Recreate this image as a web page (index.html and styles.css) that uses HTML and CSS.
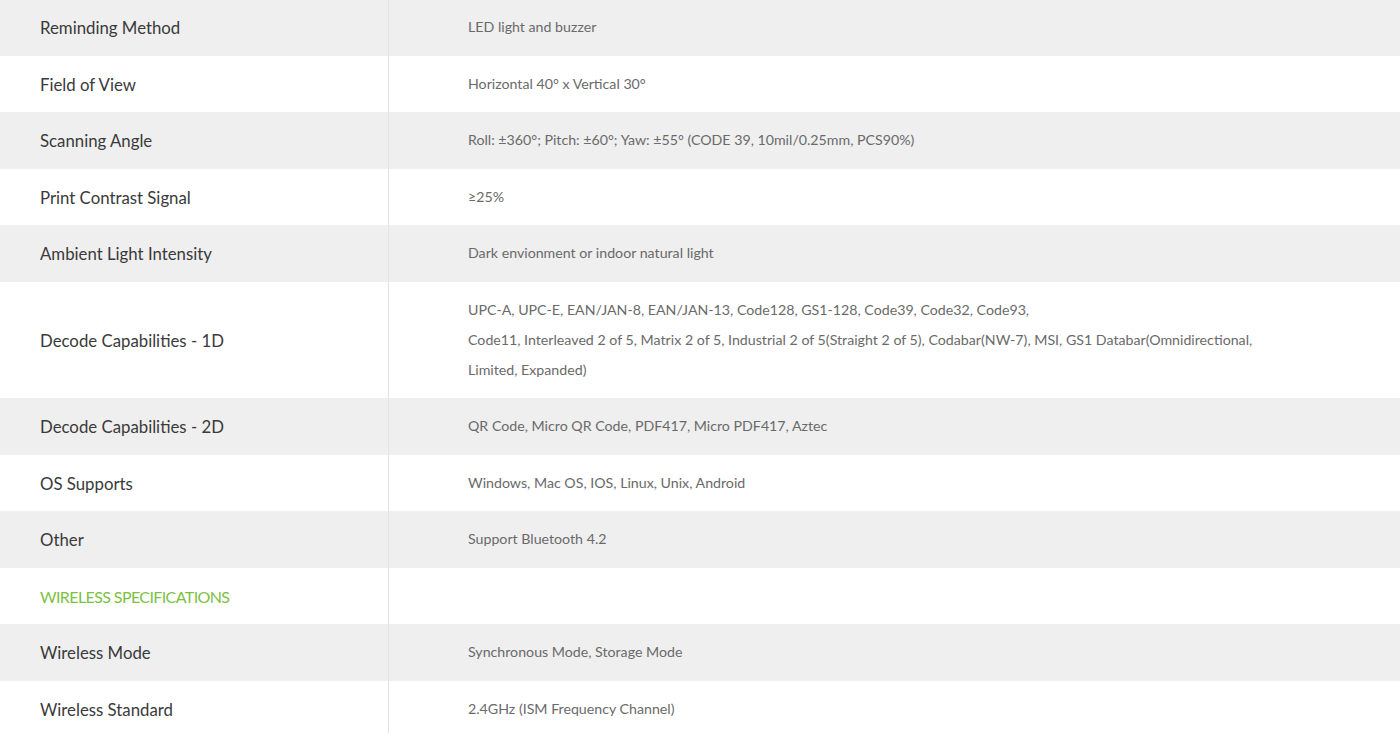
FILE: index.html
```html
<!DOCTYPE html>
<html lang="en">
<head>
<meta charset="utf-8">
<title>Specifications</title>
<link rel="stylesheet" href="styles.css">
</head>
<body>
<table class="spec">
  <tbody>
    <tr class="odd"><td class="label">Reminding Method</td><td class="value">LED light and buzzer</td></tr>
    <tr><td class="label">Field of View</td><td class="value">Horizontal 40° x Vertical 30°</td></tr>
    <tr class="odd"><td class="label">Scanning Angle</td><td class="value">Roll: ±360°; Pitch: ±60°; Yaw: ±55° (CODE 39, 10mil/0.25mm, PCS90%)</td></tr>
    <tr><td class="label">Print Contrast Signal</td><td class="value">≥25%</td></tr>
    <tr class="odd"><td class="label">Ambient Light Intensity</td><td class="value">Dark envionment or indoor natural light</td></tr>
    <tr><td class="label">Decode Capabilities - 1D</td><td class="value">UPC-A, UPC-E, EAN/JAN-8, EAN/JAN-13, Code128, GS1-128, Code39, Code32, Code93,<br>Code11, Interleaved 2 of 5, Matrix 2 of 5, Industrial 2 of 5(Straight 2 of 5), Codabar(NW-7), MSI, GS1 Databar(Omnidirectional,<br>Limited, Expanded)</td></tr>
    <tr class="odd"><td class="label">Decode Capabilities - 2D</td><td class="value">QR Code, Micro QR Code, PDF417, Micro PDF417, Aztec</td></tr>
    <tr><td class="label">OS Supports</td><td class="value">Windows, Mac OS, IOS, Linux, Unix, Android</td></tr>
    <tr class="odd"><td class="label">Other</td><td class="value">Support Bluetooth 4.2</td></tr>
    <tr><td class="label section">WIRELESS SPECIFICATIONS</td><td class="value"></td></tr>
    <tr class="odd"><td class="label">Wireless Mode</td><td class="value">Synchronous Mode, Storage Mode</td></tr>
    <tr><td class="label">Wireless Standard</td><td class="value">2.4GHz (ISM Frequency Channel)</td></tr>
  </tbody>
</table>
</body>
</html>
```

FILE: styles.css
```css
html, body {
  margin: 0;
  padding: 0;
  background: #ffffff;
}

body {
  font-family: Lato, "Open Sans", "Liberation Sans", sans-serif;
  overflow: hidden;
}

.spec {
  width: 100%;
  border-collapse: collapse;
  margin-top: -1px;
}

.spec tr.odd {
  background: #efefef;
}

.spec td {
  padding: 13.25px 0 13.25px;
  line-height: 30px;
  vertical-align: middle;
}

.label {
  width: 348px;
  padding-left: 40px !important;
  padding-top: 14px !important;
  padding-bottom: 12.5px !important;
  border-right: 1px solid #e4e4e4;
  font-size: 16.8px;
  color: #3a3a3a;
}

.label.section {
  color: #7cc242;
  font-size: 16px;
  letter-spacing: -0.6px;
}

.value {
  padding-left: 79px !important;
  font-size: 14.2px;
  color: #6a6a6a;
}
```
